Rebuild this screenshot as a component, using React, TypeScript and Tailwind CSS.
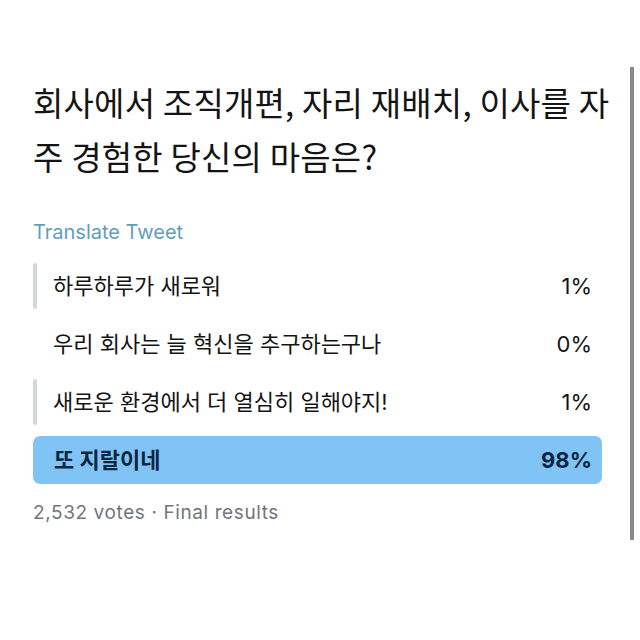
import React from 'react';

const options = [
  { label: '하루하루가 새로워', pct: 1 },
  { label: '우리 회사는 늘 혁신을 추구하는구나', pct: 0 },
  { label: '새로운 환경에서 더 열심히 일해야지!', pct: 1 },
  { label: '또 지랄이네', pct: 98, winner: true },
];

const App = () => {
  return (
    <div className="flex w-[640px] h-[640px] bg-white font-['Inter','Noto_Sans_CJK_KR',sans-serif] text-[#141414]">
      <div className="flex-1 pl-[33px] pt-[75px]">
        <div className="w-[569px]">
          <h1 className="whitespace-nowrap text-[33px] leading-[54px] tracking-[0.2px] font-normal font-['Noto_Sans_CJK_KR',sans-serif]">
            회사에서 조직개편, 자리 재배치, 이사를 자<br />주 경험한 당신의 마음은?
          </h1>

          <div className="mt-[37px] text-[20px] leading-[24px] text-[#5f9fb8]">Translate Tweet</div>

          <div className="mt-[19px] flex flex-col gap-[12px]">
            {options.map((o) =>
              o.winner ? (
                <div
                  key={o.label}
                  className="h-[48px] -my-[1px] flex items-center justify-between rounded-[7px] bg-[#7fc4f5] pl-[21px] pr-[10px] text-[22px] font-bold text-[#0f2440]"
                >
                  <span>{o.label}</span>
                  <span>{o.pct}%</span>
                </div>
              ) : (
                <div key={o.label} className="h-[46px] flex items-center">
                  <div className="w-[4px] h-full shrink-0">
                    {o.pct > 0 && <div className="w-[4px] h-full rounded-full bg-[#d3d8dd]" />}
                  </div>
                  <div className="flex-1 flex items-center justify-between pl-[16px] pr-[10px] text-[22px]">
                    <span>{o.label}</span>
                    <span>{o.pct}%</span>
                  </div>
                </div>
              )
            )}
          </div>

          <div className="mt-[18px] text-[19px] leading-[24px] tracking-[0.6px] text-[#6f767c]">2,532 votes · Final results</div>
        </div>
      </div>
      <div className="w-[4px] mt-[67px] h-[473px] bg-[#8a8a8a] mr-[6px]" />
    </div>
  );
};

export default App;
